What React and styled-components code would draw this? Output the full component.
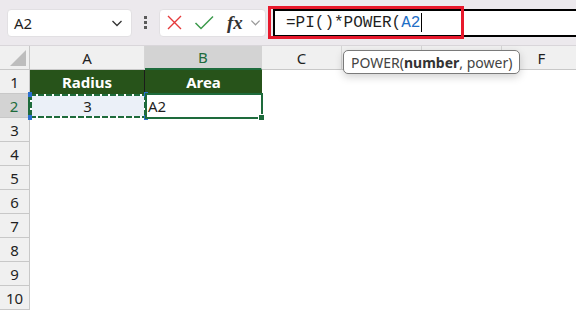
import styled, { createGlobalStyle } from 'styled-components';

const GlobalStyle = createGlobalStyle`
  html, body {
    margin: 0;
    padding: 0;
    background: #ffffff;
    font-family: "Noto Sans", "Open Sans", sans-serif;
    overflow: hidden;
  }
`;

const Page = styled.div`
  width: 576px;
  height: 312px;
  display: flex;
  flex-direction: column;
  position: relative;
  overflow: hidden;
`;

const Toolbar = styled.div`
  height: 46px;
  background: #ece9ed;
  display: flex;
  align-items: center;
  padding-left: 7px;
  box-sizing: border-box;
  border-bottom: 1px solid #d9d6da;
`;

const NameBox = styled.div`
  width: 125px;
  height: 28px;
  box-sizing: border-box;
  background: #fff;
  border-radius: 4px;
  border: 1px solid #e2e0e3;
  display: flex;
  align-items: center;
  justify-content: space-between;
  padding: 0 8px 0 6px;
  font-size: 15px;
  color: #1f1f1f;
`;

const Dots = styled.div`
  width: 27px;
  display: flex;
  flex-direction: column;
  align-items: center;
  gap: 2px;
  span {
    width: 3px;
    height: 3px;
    background: #5a5a5a;
  }
`;

const FuncBox = styled.div`
  width: 107px;
  height: 28px;
  box-sizing: border-box;
  background: #fff;
  border-radius: 4px;
  border: 1px solid #e2e0e3;
  display: flex;
  align-items: center;
  padding-left: 6px;
  gap: 11px;
`;

const Fx = styled.span`
  font-family: "Liberation Serif", serif;
  font-style: italic;
  font-weight: bold;
  font-size: 19px;
  color: #333;
  margin-left: 2px;
  margin-right: -8px;
`;

const FormulaWrap = styled.div`
  position: relative;
  flex: 1;
  height: 28px;
  margin-left: 7px;
  display: flex;
`;

const FormulaInput = styled.div`
  flex: 1;
  background: #fff;
  border-top: 2px solid #000;
  border-bottom: 2px solid #000;
  border-left: 2px solid #000;
  box-sizing: border-box;
  padding-left: 11px;
  display: flex;
  align-items: center;
  font-family: "Liberation Mono", monospace;
  font-size: 16px;
  color: #1f1f1f;
`;

const Ref = styled.span`
  color: #1f6fc6;
`;

const Caret = styled.span`
  display: inline-block;
  width: 1px;
  height: 19px;
  background: #000;
  margin-left: 1px;
`;

const Highlight = styled.div`
  position: absolute;
  left: -5px;
  top: -3px;
  width: 196px;
  height: 33px;
  box-sizing: border-box;
  border: 3px solid #e8192c;
`;

const Sheet = styled.div`
  display: grid;
  grid-template-columns: 30px 115px 117px 80px 80px 80px 80px;
  grid-auto-rows: 24px;
  position: relative;
`;

const Corner = styled.div`
  background: #f0f0f0;
  border-right: 1px solid #c8c8c8;
  border-bottom: 1px solid #c8c8c8;
  box-sizing: border-box;
  position: relative;
  &::after {
    content: '';
    position: absolute;
    right: 3px;
    bottom: 3px;
    border-left: 16px solid transparent;
    border-bottom: 16px solid #bdbdbd;
  }
`;

const ColHead = styled.div`
  background: ${(p) => (p.$active ? '#d3d3d3' : '#f0f0f0')};
  color: ${(p) => (p.$active ? '#1e6b3c' : '#1f1f1f')};
  border-right: 1px solid ${(p) => (p.$active ? '#d3d3d3' : '#d5d5d5')};
  border-bottom: ${(p) => (p.$active ? '2px solid #1e6b3c' : '1px solid #c8c8c8')};
  box-sizing: border-box;
  display: flex;
  align-items: center;
  justify-content: center;
  font-size: 15px;
`;

const RowHead = styled.div`
  background: ${(p) => (p.$active ? '#d3d3d3' : '#f0f0f0')};
  color: ${(p) => (p.$active ? '#1e6b3c' : '#1f1f1f')};
  border-right: ${(p) => (p.$active ? '2px solid #1e6b3c' : '1px solid #c8c8c8')};
  border-bottom: 1px solid #c8c8c8;
  box-sizing: border-box;
  display: flex;
  align-items: center;
  justify-content: center;
  font-size: 15px;
`;

const Cell = styled.div`
  background: ${(p) => p.$bg || '#fff'};
  color: ${(p) => p.$color || '#1f1f1f'};
  font-weight: ${(p) => (p.$bold ? 700 : 400)};
  display: flex;
  align-items: center;
  justify-content: ${(p) => p.$align || 'flex-start'};
  padding: 0 3px;
  font-size: 15px;
  box-sizing: border-box;
  position: relative;
  z-index: ${(p) => (p.$top ? 2 : 'auto')};
  border-right: ${(p) => (p.$line ? '1px solid #1b1b1b' : 'none')};
`;

const Ants = styled.div`
  position: absolute;
  inset: 0 -1px 0 0;
  background:
    repeating-linear-gradient(90deg, #1e6b3c 0 6px, #fff 6px 8px) top / 100% 2px no-repeat,
    repeating-linear-gradient(90deg, #1e6b3c 0 6px, #fff 6px 8px) bottom / 100% 2px no-repeat,
    repeating-linear-gradient(180deg, #1e6b3c 0 6px, #fff 6px 8px) left / 2px 100% no-repeat,
    repeating-linear-gradient(180deg, #1e6b3c 0 6px, #fff 6px 8px) right / 2px 100% no-repeat;
  pointer-events: none;
`;

const Handle = styled.span`
  position: absolute;
  width: 4px;
  height: 5px;
  background: #2a6fd0;
  ${(p) => (p.$top ? 'top: -2px;' : 'bottom: -2px;')}
  ${(p) => (p.$left ? 'left: -2px;' : 'right: -2px;')}
`;

const Active = styled.div`
  position: absolute;
  inset: -1px -1px -1px 0;
  border: 2px solid #1e6b3c;
  pointer-events: none;
  &::after {
    content: '';
    position: absolute;
    right: -4px;
    bottom: -4px;
    width: 5px;
    height: 5px;
    background: #1e6b3c;
    border: 1px solid #fff;
  }
`;

const Tooltip = styled.div`
  position: absolute;
  left: 343px;
  top: 50px;
  height: 24px;
  box-sizing: border-box;
  padding: 0 7px;
  background: #fff;
  border: 1px solid #7a7a7a;
  border-radius: 5px;
  box-shadow: 0 3px 8px rgba(0, 0, 0, 0.18);
  display: flex;
  align-items: center;
  font-size: 14px;
  color: #444;
  white-space: nowrap;
  z-index: 5;
  b {
    color: #333;
  }
`;

const cols = ['A', 'B', 'C', 'D', 'E', 'F'];
const green = '#27531a';

function Chevron({ color = '#333', size = 12 }) {
  return (
    <svg width={size} height={size} viewBox="0 0 12 12">
      <path d="M1.5 4 L6 8.5 L10.5 4" fill="none" stroke={color} strokeWidth="1.3" />
    </svg>
  );
}

function App() {
  const rows = [3, 4, 5, 6, 7, 8, 9, 10];
  return (
    <Page>
      <GlobalStyle />
      <Toolbar>
        <NameBox>
          <span>A2</span>
          <Chevron />
        </NameBox>
        <Dots>
          <span />
          <span />
          <span />
        </Dots>
        <FuncBox>
          <svg width="17" height="17" viewBox="0 0 17 17">
            <path d="M2 2 L15 15 M15 2 L2 15" stroke="#e5393b" strokeWidth="1.4" fill="none" />
          </svg>
          <svg width="20" height="17" viewBox="0 0 20 17">
            <path d="M1.5 9 L7 14.5 L19 2.5" stroke="#3c9a4b" strokeWidth="1.5" fill="none" />
          </svg>
          <Fx>fx</Fx>
          <span style={{ marginLeft: 4, display: 'flex' }}>
            <Chevron color="#9a9a9a" size={11} />
          </span>
        </FuncBox>
        <FormulaWrap>
          <FormulaInput>
            =PI()*POWER(<Ref>A2</Ref>
            <Caret />
          </FormulaInput>
          <Highlight />
        </FormulaWrap>
      </Toolbar>
      <Sheet>
        <Corner />
        {cols.map((c) => (
          <ColHead key={c} $active={c === 'B'}>
            {c}
          </ColHead>
        ))}

        <RowHead>1</RowHead>
        <Cell $bg={green} $color="#fff" $bold $align="center" $line>
          Radius
        </Cell>
        <Cell $bg={green} $color="#fff" $bold $align="center">
          Area
        </Cell>
        <Cell />
        <Cell />
        <Cell />
        <Cell />

        <RowHead $active>2</RowHead>
        <Cell $bg="#ebf0f8" $align="center" $top>
          3
          <Ants>
            <Handle $top $left />
            <Handle $top />
            <Handle $left />
            <Handle />
          </Ants>
        </Cell>
        <Cell $top>
          A2
          <Active />
        </Cell>
        <Cell />
        <Cell />
        <Cell />
        <Cell />

        {rows.map((r) => [
          <RowHead key={`h${r}`}>{r}</RowHead>,
          ...cols.map((c) => <Cell key={`${c}${r}`} />),
        ])}
      </Sheet>
      <Tooltip>
        POWER(<b>number</b>, power)
      </Tooltip>
    </Page>
  );
}

export default App;
